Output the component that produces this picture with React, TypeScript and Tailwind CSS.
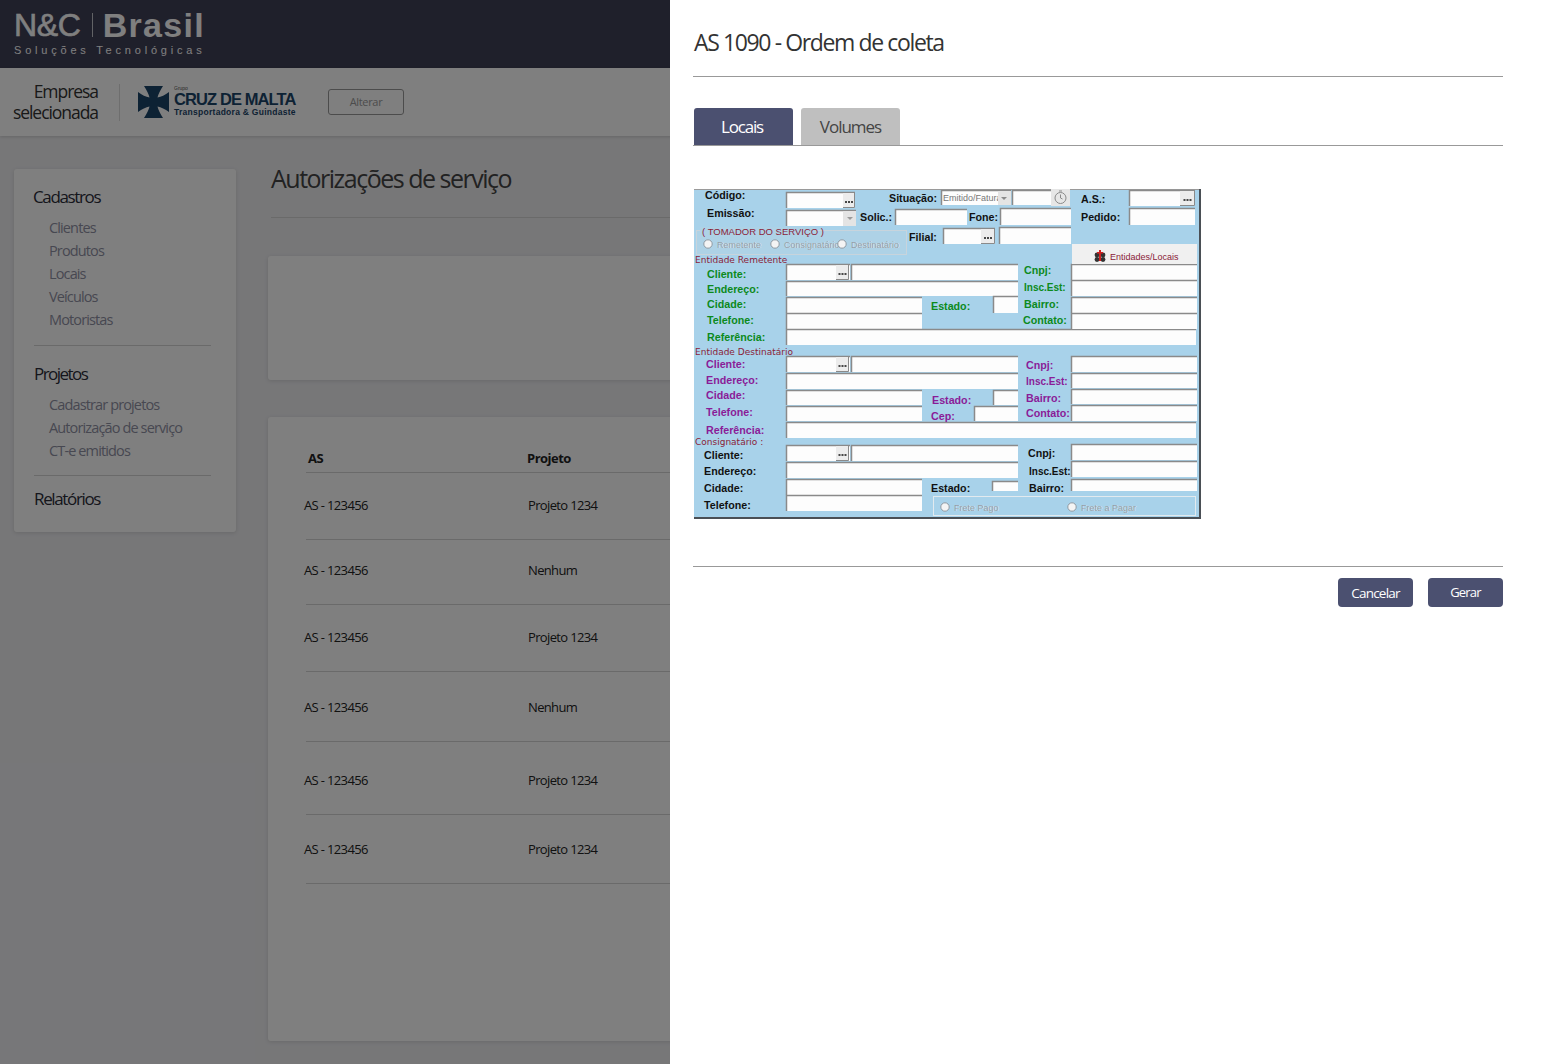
const rows = [
  { as: "AS - 123456", projeto: "Projeto 1234", rowClass: "h-[67px]" },
  { as: "AS - 123456", projeto: "Nenhum", rowClass: "h-[65px] pb-[2px]" },
  { as: "AS - 123456", projeto: "Projeto 1234", rowClass: "h-[67px]" },
  { as: "AS - 123456", projeto: "Nenhum", rowClass: "h-[70px] pt-[2px]" },
  { as: "AS - 123456", projeto: "Projeto 1234", rowClass: "h-[73px] pt-[5px]" },
  { as: "AS - 123456", projeto: "Projeto 1234", rowClass: "h-[69px] pt-[1px]" },
];

const font = "font-['Open_Sans',sans-serif]";

function Sidebar() {
  return (
    <aside className="w-[222px] h-[363px] shrink-0 bg-white rounded-[3px] shadow-[0_1px_4px_rgba(0,0,0,0.12)] pt-[17px] px-[20px]">
      <h3 className="-ml-px h-[22px] leading-[22px] text-[17px] tracking-[-0.08em] text-[#2b2c38]">Cadastros</h3>
      <ul className="mt-[8px] pl-[15px] text-[14.5px] tracking-[-0.06em] text-[#8f90a3]">
        {["Clientes", "Produtos", "Locais", "Veículos", "Motoristas"].map((item) => (
          <li key={item} className="h-[23px] leading-[23px]">{item}</li>
        ))}
      </ul>
      <div className="mt-[14px] h-px bg-[#d4d4d4] w-[177px]" />
      <h3 className="mt-[17px] h-[22px] leading-[22px] text-[17px] tracking-[-0.09em] text-[#2b2c38]">Projetos</h3>
      <ul className="mt-[8px] pl-[15px] text-[14.5px] tracking-[-0.06em] text-[#8f90a3]">
        {["Cadastrar projetos", "Autorização de serviço", "CT-e emitidos"].map((item) => (
          <li key={item} className="h-[23px] leading-[23px] whitespace-nowrap">{item}</li>
        ))}
      </ul>
      <div className="mt-[13px] h-px bg-[#d4d4d4] w-[177px]" />
      <h3 className="mt-[12px] h-[22px] leading-[22px] text-[17px] tracking-[-0.08em] text-[#2b2c38]">Relatórios</h3>
    </aside>
  );
}

function BackgroundPage() {
  return (
    <div className="h-[1064px] bg-[#eeeef1] overflow-hidden">
      <header className="h-[68px] bg-[#3e4056] pl-[14px] pt-[7px]">
        <div className="flex items-center h-[36px] font-['Liberation_Sans',sans-serif] text-white">
          <span className="text-[32px] tracking-[-0.3px] [-webkit-text-stroke:0.6px_white]">N&amp;C</span>
          <span className="mx-[11px] w-px h-[24px] bg-white/70" />
          <span className="-ml-[1px] text-[34px] font-bold tracking-[1.3px]">Brasil</span>
        </div>
        <div className="font-['Liberation_Sans',sans-serif] text-[11px] leading-[14px] tracking-[3.8px] text-white whitespace-nowrap">
          Soluções Tecnológicas
        </div>
      </header>

      <div className="h-[68px] bg-white shadow-[0_1px_3px_rgba(0,0,0,0.15)] flex items-center">
        <div className="w-[99px] -translate-x-px text-right text-[17.5px] leading-[21px] tracking-[-0.06em] text-[#333]">
          Empresa<br />selecionada
        </div>
        <div className="ml-[20px] w-px h-[37px] bg-[#dcdcdc]" />
        <svg className="ml-[18px] shrink-0" width="31" height="32" viewBox="0 0 31 32">
          <path
            fill="#1b4468"
            d="M6 0H25Q20.5 7 19.5 11.5Q25 10.5 31 6V26Q25 21.5 19.5 20.5Q20.5 25 25 32H6Q10.5 25 11.5 20.5Q6 21.5 0 26V6Q6 10.5 11.5 11.5Q10.5 7 6 0Z"
          />
        </svg>
        <div className="ml-[5px] w-[124px] font-['Liberation_Sans',sans-serif] text-[#1b4468]">
          <div className="text-[5px] leading-[5px] text-[#555]">Grupo</div>
          <div className="text-[16.5px] leading-[16px] font-bold tracking-[-0.9px] whitespace-nowrap">CRUZ DE MALTA</div>
          <div className="text-[8.5px] leading-[11px] font-bold tracking-[0.27px] whitespace-nowrap">Transportadora &amp; Guindaste</div>
        </div>
        <button className="ml-[30px] w-[76px] h-[26px] border border-[#999] rounded-[3px] text-[11px] tracking-[-0.03em] text-[#999]">
          Alterar
        </button>
      </div>

      <div className="flex pl-[14px] pt-[33px]">
        <Sidebar />
        <main className="ml-[32px] flex-1 min-w-0">
          <h1 className="-mt-[2px] pl-[3px] h-[22px] leading-[22px] text-[25px] tracking-[-0.06em] text-[#444] whitespace-nowrap">
            Autorizações de serviço
          </h1>
          <div className="ml-[3px] mt-[28px] h-px bg-[#d4d4d4]" />
          <div className="mt-[38px] h-[124px] bg-white rounded-[3px] shadow-[0_1px_4px_rgba(0,0,0,0.12)]" />
          <section className="mt-[37px] h-[624px] bg-white rounded-[3px] shadow-[0_1px_4px_rgba(0,0,0,0.12)] pl-[38px]">
            <div className="flex items-end h-[56px] pb-[4px] border-b border-[#d4d4d4] text-[13px] font-bold tracking-[-0.04em] text-[#222]">
              <span className="w-[221px] pl-[2px]">AS</span>
              <span>Projeto</span>
            </div>
            {rows.map((row, i) => (
              <div key={i} className={`${row.rowClass} flex items-center border-b border-[#d4d4d4] text-[13px] tracking-[-0.05em] text-[#222]`}>
                <span className="w-[224px] -ml-[2px]">{row.as}</span>
                <span>{row.projeto}</span>
              </div>
            ))}
          </section>
        </main>
      </div>
    </div>
  );
}

// campo do formulário antigo, com a borda afundada em cima e à esquerda
function Field({ x, y, x2, y2 }: { x: number; y: number; x2: number; y2: number }) {
  return (
    <g>
      <rect x={x} y={y} width={x2 - x} height={y2 - y} fill="#fdfdfd" />
      <path d={`M${x + 0.5} ${y2}V${y + 0.5}H${x2}`} fill="none" stroke="#8a8a8a" strokeWidth="1.5" />
    </g>
  );
}

function Dots({ x, y, x2, y2 }: { x: number; y: number; x2: number; y2: number }) {
  const cx = (x + x2) / 2;
  return (
    <g>
      <rect x={x} y={y} width={x2 - x} height={y2 - y} fill="#ececec" />
      <path d={`M${x} ${y2 - 0.5}H${x2 - 0.5}V${y}`} fill="none" stroke="#8a8a8a" />
      <path d={`M${cx - 4} ${(y + y2) / 2 + 1.5}h2m1 0h2m1 0h2`} stroke="#111" strokeWidth="1.6" />
    </g>
  );
}

function Label({ x, y, color = "#111", children }: { x: number; y: number; color?: string; children: string }) {
  return (
    <text
      x={x}
      y={y + 4}
      fill={color}
      fontFamily="'Liberation Sans', sans-serif"
      fontWeight="700"
      fontSize={children.startsWith("Insc") ? 10 : 10.7}
    >
      {children}
    </text>
  );
}

function Caption({ x, y, children }: { x: number; y: number; children: string }) {
  return (
    <text x={x} y={y + 3.5} fill="#8a2238" fontFamily="'DejaVu Sans', sans-serif" fontSize="9">
      {children}
    </text>
  );
}

function Radio({ x, y, label }: { x: number; y: number; label: string }) {
  return (
    <g>
      <circle cx={x} cy={y} r="4.2" fill="#f4f4f4" stroke="#8f9aa3" />
      <text x={x + 9.5} y={y + 4} fill="#eef4f8" fontFamily="'Liberation Sans', sans-serif" fontSize="9">
        {label}
      </text>
      <text x={x + 9} y={y + 3.5} fill="#8f9ba6" fontFamily="'Liberation Sans', sans-serif" fontSize="9">
        {label}
      </text>
    </g>
  );
}

const fields = [
  [786, 192, 855, 208], [786, 210, 856, 226], [895, 209, 967, 225], [941, 190, 1011, 205],
  [1012, 190, 1051, 205], [1129, 190, 1195, 206], [1129, 208, 1195, 225], [1000, 208, 1071, 225],
  [943, 228, 995, 244], [999, 227, 1071, 244],
  // remetente
  [786, 264, 850, 280], [851, 264, 1018, 280], [786, 281, 1018, 296], [786, 297, 922, 313],
  [786, 313, 922, 329], [786, 329, 1196, 345], [993, 296, 1018, 313], [1071, 264, 1197, 280],
  [1071, 280, 1197, 296], [1071, 297, 1197, 313], [1071, 313, 1197, 329],
  // destinatário
  [786, 356, 850, 372], [851, 356, 1018, 372], [786, 373, 1018, 389], [786, 390, 922, 405],
  [786, 406, 922, 421], [786, 422, 1196, 438], [993, 390, 1018, 405], [974, 406, 1018, 421],
  [1071, 356, 1197, 372], [1071, 373, 1197, 388], [1071, 389, 1197, 404], [1071, 405, 1197, 421],
  // consignatário
  [786, 445, 850, 461], [851, 445, 1018, 461], [786, 462, 1018, 478], [786, 479, 922, 495],
  [786, 495, 922, 511], [992, 481, 1018, 491], [1071, 444, 1197, 460], [1071, 461, 1197, 477],
  [1071, 479, 1197, 491],
];

const green = "#0c8a1c";
const purple = "#8a1c98";

const labels: [number, number, string, string?][] = [
  [705, 195, "Código:"], [707, 213, "Emissão:"], [889, 198, "Situação:"], [860, 217, "Solic.:"],
  [969, 217, "Fone:"], [909, 237, "Filial:"], [1081, 199, "A.S.:"], [1081, 217, "Pedido:"],
  [707, 274, "Cliente:", green], [707, 289, "Endereço:", green], [707, 304, "Cidade:", green],
  [707, 320, "Telefone:", green], [707, 337, "Referência:", green], [931, 306, "Estado:", green],
  [1024, 270, "Cnpj:", green], [1024, 287, "Insc.Est:", green], [1024, 304, "Bairro:", green],
  [1023, 320, "Contato:", green],
  [706, 364, "Cliente:", purple], [706, 380, "Endereço:", purple], [706, 395, "Cidade:", purple],
  [706, 412, "Telefone:", purple], [706, 430, "Referência:", purple], [932, 400, "Estado:", purple],
  [931, 416, "Cep:", purple], [1026, 365, "Cnpj:", purple], [1026, 381, "Insc.Est:", purple],
  [1026, 398, "Bairro:", purple], [1026, 413, "Contato:", purple],
  [704, 455, "Cliente:"], [704, 471, "Endereço:"], [704, 488, "Cidade:"], [704, 505, "Telefone:"],
  [931, 488, "Estado:"], [1028, 453, "Cnpj:"], [1029, 471, "Insc.Est:"], [1029, 488, "Bairro:"],
];

function LegacyForm() {
  return (
    <svg width="507" height="330" viewBox="694 189 507 330" className="block">
      <rect x="694" y="189" width="507" height="330" fill="#a8d2ea" />
      <rect x="694" y="189" width="507" height="1" fill="#9a9a9a" />
      <rect x="1199" y="189" width="2" height="330" fill="#4a4f55" />
      <rect x="694" y="517" width="507" height="2" fill="#4a4f55" />

      {fields.map(([x, y, x2, y2]) => (
        <Field key={`${x}-${y}`} x={x} y={y} x2={x2} y2={y2} />
      ))}

      <Dots x={843} y={193} x2={855} y2={208} />
      <rect x="843" y="211" width="13" height="15" fill="#e4e4e4" />
      <path d="M847 217h6l-3 3z" fill="#9a9a9a" />
      <text x="943" y="201" fill="#777" fontFamily="'Liberation Sans', sans-serif" fontSize="9">Emitido/Fatura</text>
      <rect x="998" y="191" width="13" height="14" fill="#e4e4e4" />
      <path d="M1001 197h6l-3 3z" fill="#8a8a8a" />
      <rect x="1051" y="189" width="19" height="17" fill="#e6e6e6" />
      <circle cx="1060.5" cy="198" r="5.5" fill="none" stroke="#8a8a8a" />
      <path d="M1060.5 194.5v3.5l2 1M1059 191h3" fill="none" stroke="#8a8a8a" />
      <Dots x={1180} y={191} x2={1195} y2={206} />
      <Dots x={981} y={229} x2={995} y2={244} />

      <rect x="696.5" y="230.5" width="210" height="24" fill="#aed2e6" stroke="#c8d4dc" />
      <rect x="700" y="227" width="115" height="8" fill="#aed2e6" />
      <text x="702" y="235" fill="#8a2238" fontFamily="'Liberation Sans', sans-serif" fontSize="9.5">( TOMADOR DO SERVIÇO )</text>
      <Radio x={708} y={244} label="Remetente" />
      <Radio x={775} y={244} label="Consignatário" />
      <Radio x={842} y={244} label="Destinatário" />

      <rect x="1072" y="244" width="125" height="20" fill="#f0f0f0" />
      <circle cx="1097" cy="255" r="2.4" fill="#333" />
      <circle cx="1103" cy="255" r="2.4" fill="#333" />
      <circle cx="1097" cy="259.5" r="2.4" fill="#333" />
      <circle cx="1103" cy="259.5" r="2.4" fill="#333" />
      <rect x="1099" y="250" width="2" height="11" fill="#d02020" />
      <rect x="1097" y="252" width="6" height="1.5" fill="#d02020" />
      <text x="1110" y="260" fill="#8a2238" fontFamily="'Liberation Sans', sans-serif" fontSize="9">Entidades/Locais</text>

      <Caption x={695} y={259}>Entidade Remetente</Caption>
      <Caption x={695} y={351}>Entidade Destinatário</Caption>
      <Caption x={695} y={441}>Consignatário :</Caption>

      <Dots x={836} y={265} x2={849} y2={280} />
      <Dots x={836} y={357} x2={849} y2={372} />
      <Dots x={836} y={446} x2={849} y2={461} />

      {labels.map(([x, y, text, color]) => (
        <Label key={`${x}-${y}`} x={x} y={y} color={color}>{text}</Label>
      ))}

      <rect x="933.5" y="496.5" width="262" height="19" fill="#a8d2ea" stroke="#e2eaef" />
      <Radio x={945} y={507} label="Frete Pago" />
      <Radio x={1072} y={507} label="Frete a Pagar" />
    </svg>
  );
}

function Modal() {
  return (
    <div className="absolute top-0 right-0 bottom-0 w-[877px] bg-white pl-[23px] pr-[44px]">
      <h2 className="h-[77px] pt-[30px] pl-px leading-[24px] text-[23px] tracking-[-0.06em] text-[#333] border-b border-[#999]">
        AS 1090 - Ordem de coleta
      </h2>
      <div className="mt-[31px] flex gap-[8px] h-[38px] border-b border-[#999] pl-px">
        <button className="w-[99px] h-[37px] pt-px pr-[3px] rounded-t-[3px] bg-[#4b5070] text-white text-[17px] tracking-[-0.07em]">Locais</button>
        <button className="w-[99px] h-[37px] pt-px rounded-t-[3px] bg-[#bfbfbf] text-[#444] text-[17px] tracking-[-0.06em]">Volumes</button>
      </div>
      <div className="mt-[43px] pl-px">
        <LegacyForm />
      </div>
      <div className="mt-[47px] h-px bg-[#999]" />
      <div className="mt-[11px] flex justify-end gap-[15px]">
        <button className="w-[75px] h-[29px] pt-px rounded-[4px] bg-[#4b5070] text-white text-[13.5px] tracking-[-0.06em]">Cancelar</button>
        <button className="w-[75px] h-[29px] pt-px rounded-[4px] bg-[#4b5070] text-white text-[13px] tracking-[-0.06em]">Gerar</button>
      </div>
    </div>
  );
}

export default function App() {
  return (
    <div className={`relative h-[1064px] overflow-hidden ${font}`}>
      <BackgroundPage />
      <div className="absolute inset-0 bg-black/50" />
      <Modal />
    </div>
  );
}
